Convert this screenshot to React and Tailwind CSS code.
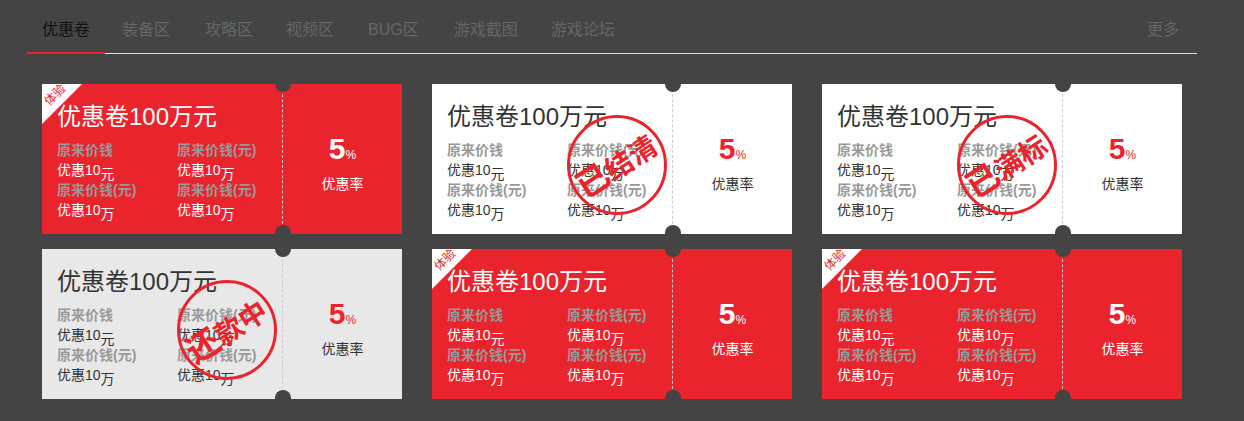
import React from "react";

const fontStack = "font-['Liberation_Sans','Noto_Sans_CJK_SC',sans-serif]";

const tabs = [
  { name: "优惠卷", className: "mr-[2px]" },
  { name: "装备区", className: "mr-[5px]" },
  { name: "攻略区", className: "mr-[3px]" },
  { name: "视频区", className: "mr-[4px]" },
  { name: "BUG区", className: "mr-[5px]" },
  { name: "游戏截图", className: "mr-[3px]" },
  { name: "游戏论坛", className: "" },
];

const coupons = [
  { theme: "red", ribbon: true },
  { theme: "white", stamp: ["已", "结", "清"] },
  { theme: "white", stamp: ["已", "满", "标"] },
  { theme: "gray", stamp: ["还", "款", "中"] },
  { theme: "red", ribbon: true },
  { theme: "red", ribbon: true },
];

const rows = [
  ["原来价钱", "元"],
  ["原来价钱(元)", "万"],
  ["原来价钱(元)", "万"],
  ["原来价钱(元)", "万"],
];

function Stamp({ chars }) {
  return (
    <div className="absolute left-[135px] top-[31px] flex h-[100px] w-[100px] items-center justify-center rounded-full border-[3px] border-[#e9242d]">
      <div className="flex -rotate-[33deg] items-baseline whitespace-nowrap font-bold leading-none text-[#e9242d]">
        <span className="text-[33px]">{chars[0]}</span>
        <span className="text-[28px]">{chars[1]}</span>
        <span className="text-[28px]">{chars[2]}</span>
      </div>
    </div>
  );
}

function Coupon({ theme, ribbon, stamp }) {
  const isRed = theme === "red";
  const surface = isRed ? "bg-[#e9242d]" : theme === "gray" ? "bg-[#e8e8e8]" : "bg-white";
  const textColor = isRed ? "text-white" : "text-[#333]";

  return (
    <div className={`relative flex h-[150px] w-[360px] overflow-hidden ${surface} ${textColor}`}>
      {/* notches */}
      <div className="absolute left-[233px] top-[-8px] h-4 w-4 rounded-full bg-[#444]" />
      <div className="absolute bottom-[-7px] left-[233px] h-4 w-4 rounded-full bg-[#444]" />

      {ribbon && (
        <div className="absolute left-0 top-0 h-10 w-10 bg-white [clip-path:polygon(0_0,100%_0,0_100%)]">
          <span className="absolute left-[1px] top-[3px] -rotate-45 text-xs leading-4 text-[#e9242d]">体验</span>
        </div>
      )}

      <div className="w-[241px] border-r border-dashed border-[#ccc] pl-[15px] pt-[15px]">
        <div className="text-2xl leading-9">优惠卷100万元</div>
        <div className="mt-[5px] grid w-[240px] grid-cols-2 text-sm leading-5">
          {rows.map(([label, unit], i) => (
            <div key={i} className={i % 2 === 0 ? "contents" : "contents"}>
              <div className="col-span-1 font-bold text-[#999]">{label}</div>
            </div>
          )).slice(0, 0)}
          <div>
            <div className="font-bold text-[#999]">原来价钱</div>
            <div>优惠10<sub className="text-sm">元</sub></div>
            <div className="font-bold text-[#999]">原来价钱(元)</div>
            <div>优惠10<sub className="text-sm">万</sub></div>
          </div>
          <div>
            <div className="font-bold text-[#999]">原来价钱(元)</div>
            <div>优惠10<sub className="text-sm">万</sub></div>
            <div className="font-bold text-[#999]">原来价钱(元)</div>
            <div>优惠10<sub className="text-sm">万</sub></div>
          </div>
        </div>
      </div>

      <div className="flex flex-1 flex-col items-center pt-[47px]">
        <div className={`leading-9 ${isRed ? "text-white" : "text-[#e9242d]"}`}>
          <span className="text-[30px] font-bold">5</span>
          <span className="text-xs">%</span>
        </div>
        <div className="mt-[2px] text-sm leading-5">优惠率</div>
      </div>

      {stamp && <Stamp chars={stamp} />}
    </div>
  );
}

export default function App() {
  return (
    <div className={`min-h-screen bg-[#444] pl-[27px] ${fontStack}`}>
      <nav className="flex h-[54px] w-[1170px] items-end border-b border-[#ddd] text-base">
        {tabs.map((tab, i) => (
          <a
            key={tab.name}
            className={`-mb-px flex h-[36px] items-start px-[15px] leading-6 ${tab.className} ${
              i === 0 ? "border-b-2 border-[#e9242d] text-[#111]" : "text-[#666]"
            }`}
          >
            {tab.name}
          </a>
        ))}
        <a className="-mb-px ml-auto mr-[3px] flex h-[36px] items-start px-[15px] leading-6 text-[#666]">更多</a>
      </nav>

      <div className="ml-[15px] mt-[30px] grid w-[1140px] grid-cols-[360px_360px_360px] gap-x-[30px] gap-y-[15px]">
        {coupons.map((coupon, i) => (
          <Coupon key={i} {...coupon} />
        ))}
      </div>
    </div>
  );
}
